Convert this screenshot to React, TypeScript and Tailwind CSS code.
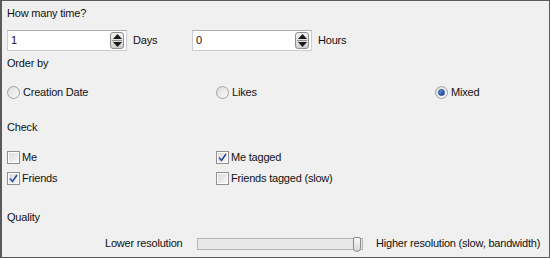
import React from 'react';

const font = { fontFamily: '"Liberation Sans", Arial, sans-serif' };

function SpinBox({ value }: { value: string }) {
  return (
    <div className="flex items-center h-[21px] w-[120px] bg-white border border-[#c9ced6] border-t-[#abadb3] pl-[3px] pr-[2px]">
      <span className="flex-1 leading-none text-[#111]">{value}</span>
      <div className="flex flex-col items-center justify-center w-[14px] h-[17px] rounded-[3px] border border-[#8e8f8f] bg-gradient-to-b from-[#f2f2f2] to-[#d0d0d0]">
        <svg width="9" height="5" viewBox="0 0 9 5"><path d="M4.5 0 L9 5 L0 5 Z" fill="#1a1a1a" /></svg>
        <div className="w-[10px] h-px bg-[#8e8f8f] my-[1px]" />
        <svg width="9" height="5" viewBox="0 0 9 5"><path d="M0 0 L9 0 L4.5 5 Z" fill="#1a1a1a" /></svg>
      </div>
    </div>
  );
}

function Radio({ label, checked }: { label: string; checked?: boolean }) {
  return (
    <div className="flex items-center gap-[3px]">
      <div className="w-[13px] h-[13px] rounded-full border border-[#a0a0a0] bg-gradient-to-br from-[#dcdcdc] to-[#fbfbfb] flex items-center justify-center">
        {checked && <div className="w-[7px] h-[7px] rounded-full bg-gradient-to-br from-[#6d9ede] to-[#173e8c] border border-[#1c4595]" />}
      </div>
      <span className="leading-[15px] text-[#111]">{label}</span>
    </div>
  );
}

function Check({ label, checked }: { label: string; checked?: boolean }) {
  return (
    <div className="flex items-center gap-[2px]">
      <div className="w-[13px] h-[13px] border border-[#8f8f8f] bg-white p-[1px]">
        <div className="w-full h-full bg-gradient-to-br from-[#dcdcdc] to-[#f6f6f6] flex items-center justify-center">
          {checked && (
            <svg width="9" height="9" viewBox="0 0 9 9">
              <path d="M1 4.5 L3.5 7.5 L8 1" stroke="#2a4d9c" strokeWidth="1.6" fill="none" />
            </svg>
          )}
        </div>
      </div>
      <span className="leading-[15px] text-[#111]">{label}</span>
    </div>
  );
}

export default function App() {
  return (
    <div
      className="w-[550px] h-[258px] bg-[#f0f0f0] border border-[#5a5a5a] border-l-2 flex flex-col pl-[5px] pt-[5px] text-[11px] tracking-[-0.2px]"
      style={font}
    >
      <div className="leading-[15px] text-[#111]">How many time?</div>

      <div className="flex items-center mt-[9px] h-[21px]">
        <SpinBox value="1" />
        <span className="ml-[6px] w-[59px] text-[#111]">Days</span>
        <SpinBox value="0" />
        <span className="ml-[6px] text-[#111]">Hours</span>
      </div>

      <div className="mt-[5px] leading-[15px] text-[#111]">Order by</div>

      <div className="flex mt-[14px] h-[15px]">
        <div className="w-[209px]"><Radio label="Creation Date" /></div>
        <div className="w-[219px]"><Radio label="Likes" /></div>
        <div><Radio label="Mixed" checked /></div>
      </div>

      <div className="mt-[20px] leading-[15px] text-[#111]">Check</div>

      <div className="flex mt-[15px] h-[15px]">
        <div className="w-[209px]"><Check label="Me" /></div>
        <div><Check label="Me tagged" checked /></div>
      </div>
      <div className="flex mt-[6px] h-[15px]">
        <div className="w-[209px]"><Check label="Friends" checked /></div>
        <div><Check label="Friends tagged (slow)" /></div>
      </div>

      <div className="mt-[24px] leading-[15px] text-[#111]">Quality</div>

      <div className="flex items-center mt-[11px] h-[15px]">
        <span className="ml-[98px] w-[92px] text-[#111]">Lower resolution</span>
        <div className="relative w-[166px] h-[12px] border border-[#b4b4b4] bg-[#e7e7e7]">
          <div className="absolute right-[1px] -top-[2px] w-[8px] h-[15px] rounded-b-[4px] rounded-t-[2px] border border-[#8a8a8a] bg-gradient-to-b from-[#f8f8f8] to-[#dadada]" />
        </div>
        <span className="ml-[13px] whitespace-nowrap text-[#111]">Higher resolution (slow, bandwidth)</span>
      </div>
    </div>
  );
}
